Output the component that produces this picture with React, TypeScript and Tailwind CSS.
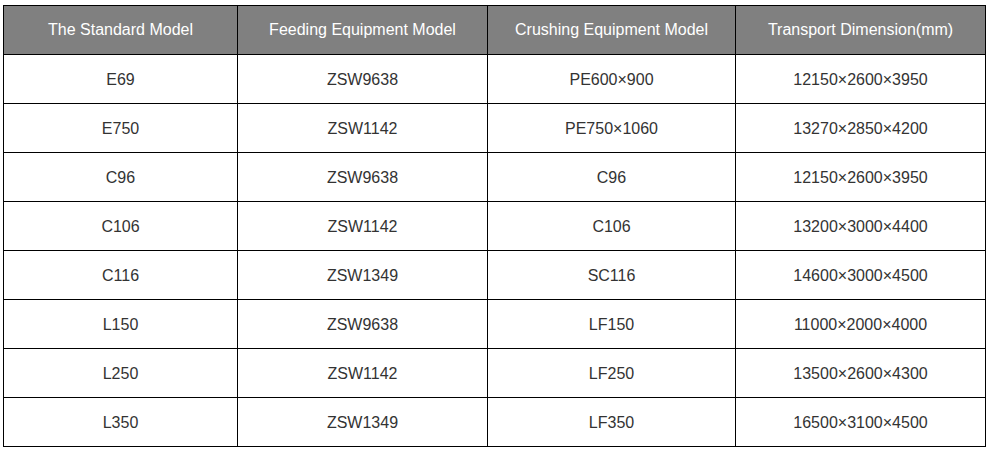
const HEAD = ['The Standard Model', 'Feeding Equipment Model', 'Crushing Equipment Model', 'Transport Dimension(mm)']

const ROWS: string[][] = [
  ['E69', 'ZSW9638', 'PE600×900', '12150×2600×3950'],
  ['E750', 'ZSW1142', 'PE750×1060', '13270×2850×4200'],
  ['C96', 'ZSW9638', 'C96', '12150×2600×3950'],
  ['C106', 'ZSW1142', 'C106', '13200×3000×4400'],
  ['C116', 'ZSW1349', 'SC116', '14600×3000×4500'],
  ['L150', 'ZSW9638', 'LF150', '11000×2000×4000'],
  ['L250', 'ZSW1142', 'LF250', '13500×2600×4300'],
  ['L350', 'ZSW1349', 'LF350', '16500×3100×4500'],
]

export default function App() {
  return (
    <div className="bg-white w-[988px] h-[451px] pt-[5px] pl-[3px] font-['Liberation_Sans',Arial,sans-serif] text-[16px]">
      <table className="table-fixed border-collapse w-[982px]">
        <colgroup>
          <col className="w-[234px]" />
          <col className="w-[250px]" />
          <col className="w-[248px]" />
          <col className="w-[250px]" />
        </colgroup>
        <thead>
          <tr className="h-[49px] bg-[#808080] text-white">
            {HEAD.map((h) => (
              <th key={h} className="border border-black font-normal text-center p-0">
                {h}
              </th>
            ))}
          </tr>
        </thead>
        <tbody>
          {ROWS.map((row) => (
            <tr key={row[0]} className="h-[49px] text-[#333333]">
              {row.map((cell, i) => (
                <td key={i} className="border border-black text-center p-0 pt-[1px]">
                  {cell}
                </td>
              ))}
            </tr>
          ))}
        </tbody>
      </table>
    </div>
  )
}
